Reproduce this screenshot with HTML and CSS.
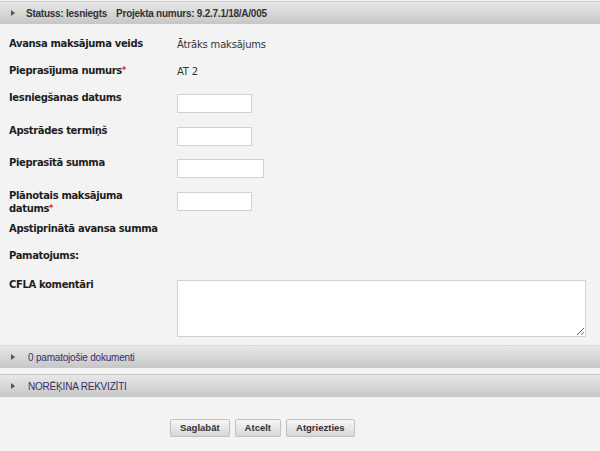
FILE: index.html
```html
<!DOCTYPE html>
<html lang="lv">
<head>
<meta charset="utf-8">
<title>Avansa pieprasījums</title>
<link rel="stylesheet" href="styles.css">
</head>
<body>
<div class="page">
  <div class="bar bar-head">
    <span class="tri"></span>
    <span class="head-text"><span>Statuss: Iesniegts</span><span>Projekta numurs: 9.2.7.1/18/A/005</span></span>
  </div>

  <div class="form">
    <div class="row r27">
      <div class="label">Avansa maksājuma veids</div>
      <div class="value">Ātrāks maksājums</div>
    </div>
    <div class="row r27">
      <div class="label">Pieprasījuma numurs<span class="req">*</span></div>
      <div class="value">AT 2</div>
    </div>
    <div class="row r33">
      <div class="label">Iesniegšanas datums</div>
      <div class="field"><input class="inp" type="text"></div>
    </div>
    <div class="row r32">
      <div class="label">Apstrādes termiņš</div>
      <div class="field"><input class="inp" type="text"></div>
    </div>
    <div class="row r32">
      <div class="label">Pieprasītā summa</div>
      <div class="field"><input class="inp inp-wide" type="text"></div>
    </div>
    <div class="row r34">
      <div class="label label-2l"><span class="ln">Plānotais maksājuma</span><span class="ln">datums<span class="req">*</span></span></div>
      <div class="field field-3"><input class="inp" type="text"></div>
    </div>
    <div class="row r27">
      <div class="label">Apstiprinātā avansa summa</div>
    </div>
    <div class="row r29">
      <div class="label">Pamatojums:</div>
    </div>
    <div class="row">
      <div class="label">CFLA komentāri</div>
      <div class="field field-1"><textarea class="ta"></textarea></div>
    </div>
  </div>

  <div class="bar bar-sec">
    <span class="tri"></span>
    <span class="sec-text">0 pamatojošie dokumenti</span>
  </div>
  <div class="bar bar-sec bar-sec2">
    <span class="tri"></span>
    <span class="sec-text">NORĒĶINA REKVIZĪTI</span>
  </div>

  <div class="actions">
    <button class="btn" type="button">Saglabāt</button>
    <button class="btn" type="button">Atcelt</button>
    <button class="btn" type="button">Atgriezties</button>
  </div>
</div>
</body>
</html>
```

FILE: styles.css
```css
html, body {
  margin: 0;
  padding: 0;
  background: #f3f3f3;
}

.page {
  padding-top: 1px;
  font-family: "Liberation Sans", Arial, sans-serif;
}

.bar {
  display: flex;
  align-items: center;
  height: 22px;
  border-top: 1px solid #cdcdcd;
  background: linear-gradient(#e8e8e8, #c6c6c6);
}

.tri {
  width: 0;
  height: 0;
  margin-left: 11px;
  border-left: 4px solid #555;
  border-top: 3px solid transparent;
  border-bottom: 3px solid transparent;
}

.head-text {
  display: flex;
  gap: 9px;
  margin-left: 11px;
  font-size: 10px;
  font-weight: bold;
  letter-spacing: -0.25px;
  color: #333;
}

.form {
  padding: 14px 0 8px;
  font-family: "DejaVu Sans", Verdana, sans-serif;
  font-size: 10px;
  line-height: 12px;
}

.row {
  display: flex;
  align-items: flex-start;
}

.r27 { min-height: 27px; }
.r29 { min-height: 29px; }
.r32 { min-height: 32px; }
.r33 { min-height: 33px; }
.r34 { min-height: 34px; }

.label {
  width: 168px;
  flex: none;
  padding-left: 9px;
  font-weight: bold;
  color: #1e1e1e;
  letter-spacing: -0.35px;
}

.label-2l {
  line-height: 13px;
}

.ln {
  display: block;
}

.req {
  color: #e3101e;
  font-size: 8px;
  line-height: 0;
  vertical-align: 1px;
  letter-spacing: 0;
}

.value {
  padding-top: 1px;
  color: #333;
  letter-spacing: -0.2px;
}

.field {
  padding-top: 2px;
}

.field-3 { padding-top: 3px; }
.field-1 { padding-top: 1px; }

.inp {
  display: block;
  box-sizing: border-box;
  width: 75px;
  height: 19px;
  margin: 0;
  padding: 0 3px;
  border: 1px solid #d2d2d2;
  background: #fff;
  outline: none;
}

.inp-wide { width: 87px; }

.ta {
  display: block;
  box-sizing: border-box;
  width: 409px;
  height: 57px;
  margin: 0;
  padding: 2px;
  border: 1px solid #d2d2d2;
  background: #fff;
  outline: none;
}

.bar-sec {
  border-top-color: #d9d9d9;
}

.bar-sec2 {
  margin-top: 6px;
  border-top-color: #c9c9c9;
}

.sec-text {
  margin-left: 13px;
  font-size: 10px;
  letter-spacing: -0.2px;
  color: #3b2d6b;
}

.actions {
  display: flex;
  gap: 5px;
  padding: 22px 0 0 170px;
}

.btn {
  box-sizing: border-box;
  height: 18px;
  margin: 0;
  padding: 0 9px;
  border: 1px solid #c2c2c2;
  border-radius: 2px;
  background: linear-gradient(#f6f6f6, #d7d7d7);
  box-shadow: 0 1px 1px rgba(0, 0, 0, 0.08);
  font-family: "Liberation Sans", Arial, sans-serif;
  font-size: 9.5px;
  font-weight: bold;
  color: #333;
  line-height: 16px;
}
```
